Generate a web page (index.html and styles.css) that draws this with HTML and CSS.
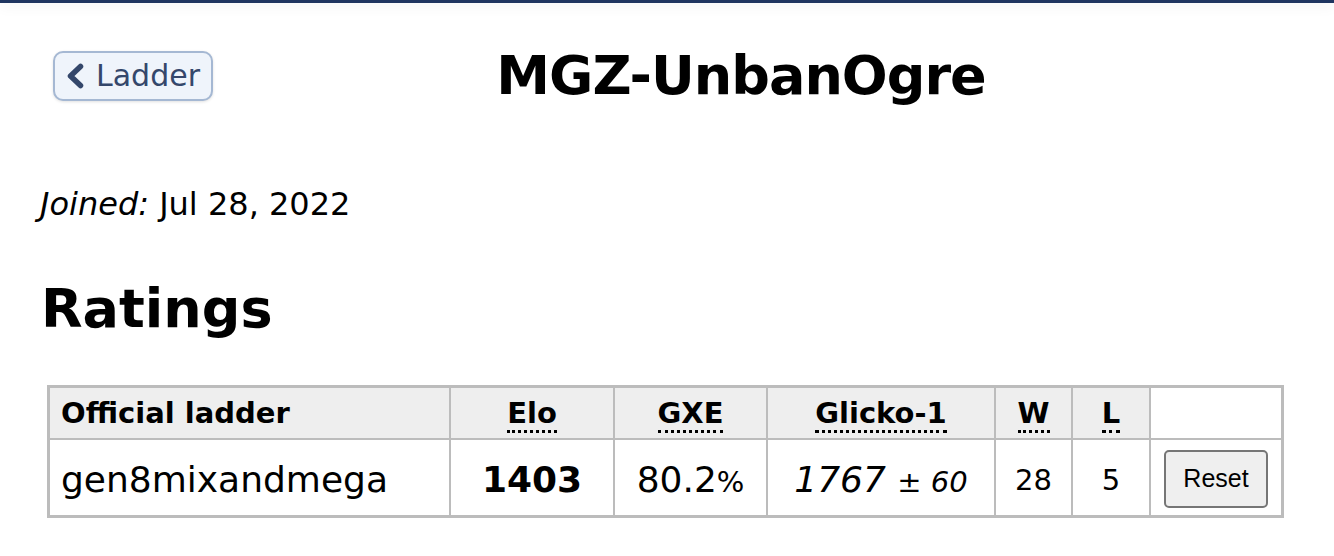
FILE: index.html
```html
<!DOCTYPE html>
<html>
<head lang="en">
    <meta charset="UTF-8">
    <title>MGZ-UnbanOgre</title>
    <link rel="stylesheet" href="styles.css">
</head>
<body>
<div class="topbar"></div>
<div class="page">
    <div class="head">
        <a class="back" href="#">
            <svg class="chev" viewBox="0 0 20 26" width="20" height="26"><path d="M15.5 3.5 L5.5 13 L15.5 22.5" fill="none" stroke="#34476b" stroke-width="5.5" stroke-linecap="round" stroke-linejoin="round"/></svg>
            Ladder
        </a>
        <h1 class="name">MGZ-UnbanOgre</h1>
    </div>
    <p class="joined"><em>Joined:</em> Jul 28, 2022</p>
    <h2 class="sec">Ratings</h2>
    <table class="ratings">
        <tr class="hrow">
            <th class="first">Official ladder</th>
            <th class="c1"><abbr>Elo</abbr></th>
            <th class="c2"><abbr>GXE</abbr></th>
            <th class="c3"><abbr>Glicko-1</abbr></th>
            <th class="c4"><abbr>W</abbr></th>
            <th class="c5"><abbr>L</abbr></th>
            <th class="c6"></th>
        </tr>
        <tr class="drow">
            <td class="first">gen8mixandmega</td>
            <td class="elo">1403</td>
            <td>80.2<small>%</small></td>
            <td><em>1767</em> <small>&plusmn; <em>60</em></small></td>
            <td class="small">28</td>
            <td class="small">5</td>
            <td class="btncell"><button class="reset">Reset</button></td>
        </tr>
    </table>
</div>
</body>
</html>
```

FILE: styles.css
```css
body{
    margin: 0;
    font-family: "DejaVu Sans", Verdana, sans-serif;
    color: #000;
    background: #fff;
}
.topbar{
    height: 3px;
    background: #1f3560;
    box-shadow: 0 2px 14px rgba(0,0,0,0.12);
}
.page{
    padding: 0 40px;
}
.head{
    display: flex;
    align-items: center;
    padding: 41px 0 0 13px;
}
.back{
    display: flex;
    align-items: center;
    gap: 11px;
    height: 46px;
    padding: 0 11px 0 10px;
    border: 2px solid #a5b8d3;
    border-radius: 10px;
    background: #eff4fb;
    color: #34476b;
    font-size: 30px;
    text-decoration: none;
    box-shadow: 0 1px 3px rgba(0,0,0,0.12);
}
.name{
    flex: 1;
    margin: 0 25px 0 0;
    text-align: center;
    font-size: 54px;
    letter-spacing: -1px;
}
.joined{
    margin: 78px 0 0 0;
    font-size: 32px;
}
.sec{
    margin: 54px 0 0 1px;
    font-size: 54px;
}
.ratings{
    margin: 45px 0 0 7px;
    border-collapse: collapse;
    border: 3px solid #bcbcbc;
}
.ratings th, .ratings td{
    border: 2px solid #bcbcbc;
    text-align: center;
    padding: 0 11px;
}
.hrow th{
    background: #eeeeee;
    height: 50px;
    font-size: 29px;
}
.hrow th.c6{
    background: #fff;
}
.ratings td{
    height: 71px;
    padding-top: 4px;
    font-size: 36px;
}
.ratings td.btncell{
    padding-top: 2px;
}
.ratings .first{
    text-align: left;
    width: 377px;
}
.c1{ width: 140px; }
.c2{ width: 129px; }
.c3{ width: 204px; }
.c4{ width: 53px; }
.c5{ width: 54px; }
.c6{ width: 108px; }
abbr{
    text-decoration: none;
    border-bottom: 3px dotted #000;
}
.elo{
    font-weight: bold;
}
small{
    font-size: 29px;
}
.small{
    font-size: 29px !important;
}
.reset{
    font-family: "Liberation Sans", Arial, sans-serif;
    font-size: 25px;
    padding: 0;
    width: 104px;
    height: 58px;
    background: #efefef;
    border: 2px solid #767676;
    border-radius: 5px;
    color: #000;
}
```
